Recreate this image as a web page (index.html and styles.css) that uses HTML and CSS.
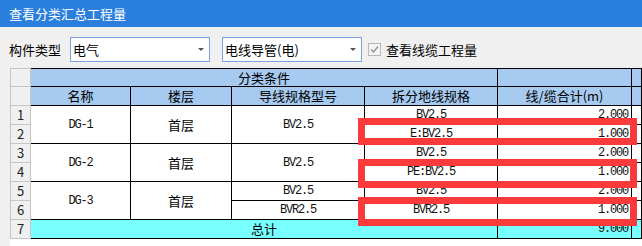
FILE: index.html
```html
<!DOCTYPE html>
<html lang="zh-CN">
<head>
<meta charset="utf-8">
<title>查看分类汇总工程量</title>
<link rel="stylesheet" href="styles.css">
</head>
<body>
<div class="window">
  <div class="titlebar">查看分类汇总工程量</div>
  <div class="toolbar">
    <span class="label">构件类型</span>
    <div class="combo"><span class="combo-text">电气</span><span class="arrow"></span></div>
    <div class="combo combo-2"><span class="combo-text">电线导管(电)</span><span class="arrow"></span></div>
    <div class="check">
      <span class="box"><svg width="11" height="11" viewBox="0 0 11 11"><path d="M2 5.5 L4.5 8 L9 2.5" fill="none" stroke="#8c8c8c" stroke-width="1.2"/></svg></span>
      <span class="check-text">查看线缆工程量</span>
    </div>
  </div>
  <div class="grid-wrap">
    <div class="grid">
      <div class="rn rn-top"></div>
      <div class="hd hd-top span4">分类条件</div>
      <div class="hd hd-top"></div>
      <div class="hd hd-top"></div>

      <div class="rn"></div>
      <div class="hd">名称</div>
      <div class="hd">楼层</div>
      <div class="hd">导线规格型号</div>
      <div class="hd">拆分地线规格</div>
      <div class="hd">线/缆合计(m)</div>
      <div class="hd"></div>

      <div class="rn">1</div>
      <div class="cd span2r">DG-1</div>
      <div class="cd cjk span2r">首层</div>
      <div class="cd span2r">BV2.5</div>
      <div class="cd">BV2.5</div>
      <div class="cd num">2.000</div>
      <div class="cd"></div>

      <div class="rn">2</div>
      <div class="cd">E:BV2.5</div>
      <div class="cd num">1.000</div>
      <div class="cd"></div>

      <div class="rn">3</div>
      <div class="cd span2r">DG-2</div>
      <div class="cd cjk span2r">首层</div>
      <div class="cd span2r">BV2.5</div>
      <div class="cd">BV2.5</div>
      <div class="cd num">2.000</div>
      <div class="cd"></div>

      <div class="rn">4</div>
      <div class="cd">PE:BV2.5</div>
      <div class="cd num">1.000</div>
      <div class="cd"></div>

      <div class="rn">5</div>
      <div class="cd span2r">DG-3</div>
      <div class="cd cjk span2r">首层</div>
      <div class="cd">BV2.5</div>
      <div class="cd">BV2.5</div>
      <div class="cd num">2.000</div>
      <div class="cd"></div>

      <div class="rn">6</div>
      <div class="cd">BVR2.5</div>
      <div class="cd">BVR2.5</div>
      <div class="cd num">1.000</div>
      <div class="cd"></div>

      <div class="rn">7</div>
      <div class="cd total cjk span4">总计</div>
      <div class="cd total num">9.000</div>
      <div class="cd total"></div>
    </div>
  </div>
  <div class="mark mark-1"></div>
  <div class="mark mark-2"></div>
  <div class="mark mark-3"></div>
</div>
</body>
</html>
```

FILE: styles.css
```css
html, body {
  margin: 0;
  padding: 0;
}
body {
  width: 642px;
  height: 246px;
  overflow: hidden;
  font-family: "Noto Sans CJK SC", "Noto Sans", sans-serif;
}
.window {
  position: relative;
  width: 642px;
  height: 246px;
  overflow: hidden;
  background: #f0f0f0;
  display: flex;
  flex-direction: column;
}
.titlebar {
  height: 27px;
  line-height: 27px;
  background: #2b7fdc;
  color: #ffffff;
  font-size: 13px;
  padding-left: 9px;
  flex: none;
}
.toolbar {
  display: flex;
  align-items: center;
  height: 25px;
  margin-top: 10px;
  padding-left: 9px;
  flex: none;
  font-size: 13px;
  color: #000;
}
.label {
  width: 61px;
  line-height: 25px;
}
.combo {
  width: 140px;
  height: 25px;
  box-sizing: border-box;
  border: 1px solid #7da2e3;
  background: #ffffff;
  display: flex;
  align-items: center;
  padding-left: 2px;
}
.combo-2 {
  margin-left: 12px;
}
.combo-text {
  line-height: 23px;
}
.arrow {
  margin-left: auto;
  margin-right: 5px;
  width: 0;
  height: 0;
  border-left: 3px solid transparent;
  border-right: 3px solid transparent;
  border-top: 3px solid #555;
}
.check {
  display: flex;
  align-items: center;
  margin-left: 6px;
}
.box {
  width: 13px;
  height: 13px;
  box-sizing: border-box;
  border: 1px solid #b8b8b8;
  background: #f4f4f4;
  display: flex;
  align-items: center;
  justify-content: center;
}
.check-text {
  margin-left: 5px;
  line-height: 25px;
}
.grid-wrap {
  margin-top: 6px;
  margin-left: 10px;
  flex: 1;
  background: #ffffff;
}
.grid {
  display: grid;
  grid-template-columns: 21px 100px 101px 133px 133px 134px 1fr;
  grid-template-rows: repeat(9, 19px);
}
.grid > div {
  box-sizing: border-box;
  display: flex;
  align-items: center;
  justify-content: center;
  border-right: 1px solid #000;
  border-bottom: 1px solid #000;
  overflow: hidden;
  white-space: nowrap;
}
.grid > .rn {
  background: #f0f0f0;
  border-left: 1px solid #c6c6c6;
  border-right: 1px solid #c6c6c6;
  border-bottom: 1px solid #c6c6c6;
  font-size: 13px;
  color: #222;
  line-height: 18px;
}
.grid > .rn-top {
  border-top: 1px solid #c6c6c6;
}
.grid > .hd {
  background: #a6caf0;
  font-size: 13px;
  line-height: 18px;
  color: #000;
}
.grid > .hd-top {
  border-top: 1px solid #000;
}
.grid > .cd {
  background: #ffffff;
  font-family: "Liberation Mono", "Noto Sans CJK SC", monospace;
  font-size: 12px;
  letter-spacing: -1.2px;
  line-height: 18px;
  color: #111;
}
.grid > .cjk {
  font-family: "Noto Sans CJK SC", sans-serif;
  font-size: 13px;
  letter-spacing: 0;
  color: #000;
}
.grid > .num {
  justify-content: flex-end;
  padding-right: 3px;
}
.grid > .total {
  background: #78ffff;
}
.span4 {
  grid-column: span 4;
}
.span2r {
  grid-row: span 2;
}
.mark {
  position: absolute;
  left: 358px;
  width: 279px;
  box-sizing: border-box;
  border: 7px solid #fb3b3b;
}
.mark-1 {
  top: 118px;
  height: 27px;
}
.mark-2 {
  top: 159px;
  height: 29px;
}
.mark-3 {
  top: 197px;
  height: 29px;
}
```
